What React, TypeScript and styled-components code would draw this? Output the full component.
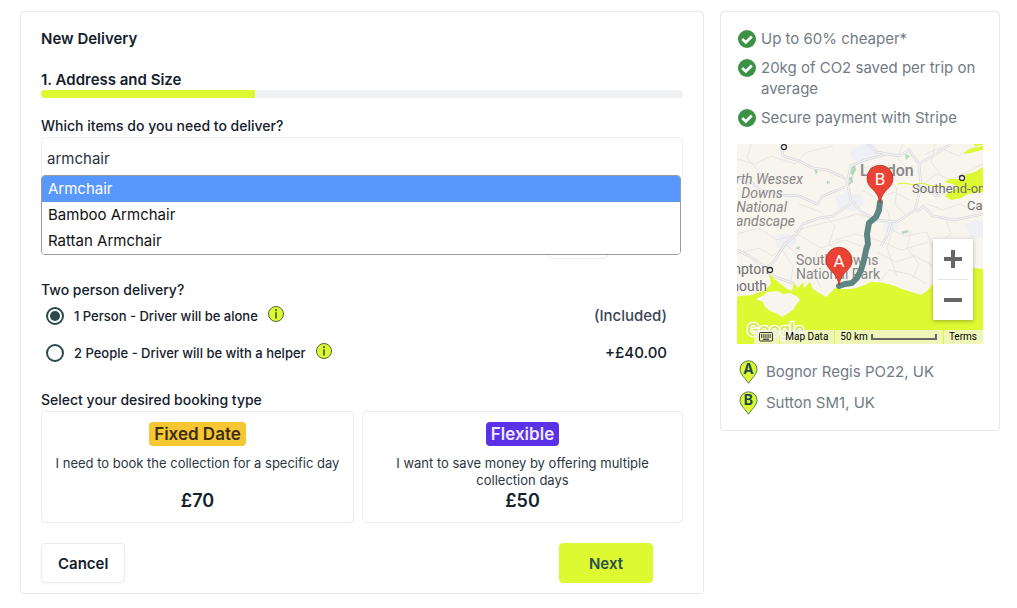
import React, { useState } from "react";
import styled, { createGlobalStyle, css } from "styled-components";

const lime = "#dcf931";
const ink = "#14202c";
const line = "#e6e8ea";

const GlobalStyle = createGlobalStyle`
  *, *::before, *::after { box-sizing: border-box; }
  body {
    margin: 0;
    background: #fff;
    color: ${ink};
    font-family: Inter, "Liberation Sans", sans-serif;
    font-size: 14px;
    line-height: 20px;
  }
  button, input { font: inherit; color: inherit; }
  h1, h2, p, ul { margin: 0; padding: 0; }
  ul { list-style: none; }
`;

const Page = styled.main`
  display: grid;
  grid-template-columns: minmax(0, 1fr) 280px;
  align-items: start;
  gap: 16px;
  padding: 11px 17px 14px 20px;
`;

const Panel = styled.section`
  border: 1px solid ${line};
  border-radius: 4px;
  background: #fff;
`;

const FormPanel = styled(Panel)`
  padding: 16px 20px 10px;
`;

const SidePanel = styled(Panel)`
  padding: 16px 16px 12px;
`;

const Title = styled.h1`
  font-size: 15px;
  font-weight: 600;
  line-height: 22px;
`;

const StepTitle = styled.h2`
  margin-top: 20px;
  font-size: 15px;
  font-weight: 600;
  line-height: 20px;
`;

const Track = styled.div`
  height: 8px;
  border-radius: 4px;
  background: #f0f1f2;
  overflow: hidden;
`;

const Fill = styled.div`
  width: 33.4%;
  height: 100%;
  background: ${lime};
`;

const labelText = css<{ $top: number }>`
  display: block;
  margin: ${(p) => p.$top}px 0 1px;
  font-weight: 500;
`;

const FieldLabel = styled.label<{ $top: number }>`
  ${labelText}
`;

const GroupLabel = styled.div<{ $top: number }>`
  ${labelText}
`;

const Combo = styled.div`
  position: relative;
`;

const SearchInput = styled.input`
  display: block;
  width: 100%;
  height: 42px;
  padding: 0 5px;
  border: 1px solid #ebecee;
  border-radius: 4px;
  background: #fff;
  color: #2b333b;
  font-size: 15px;
  outline: none;
`;

const Options = styled.ul`
  position: absolute;
  z-index: 2;
  top: 38px;
  left: 0;
  right: 2px;
  border: 1px solid #9b9b9b;
  border-radius: 4px;
  background: #fff;
  overflow: hidden;
`;

const Option = styled.li<{ $active: boolean }>`
  padding: 0 6px;
  font-size: 15px;
  line-height: 26px;
  color: ${(p) => (p.$active ? "#fff" : "#111")};
  background: ${(p) => (p.$active ? "#5897fb" : "#fff")};
`;

const AddRow = styled.div`
  display: flex;
  justify-content: flex-end;
  padding: 40px 75px 0 0;
`;

const AddButton = styled.button`
  width: 60px;
  height: 40px;
  border: 1px solid #ebecee;
  border-radius: 4px;
  background: #fff;
`;

const Choices = styled.div`
  display: grid;
  gap: 7px;
`;

const Choice = styled.div`
  display: flex;
  align-items: center;
  height: 30px;
  padding: 0 16px 0 5px;
  font-size: 13px;
  font-weight: 500;
`;

const Radio = styled.input`
  appearance: none;
  flex: none;
  display: grid;
  place-items: center;
  width: 18px;
  height: 18px;
  margin: 0 10px 0 0;
  border: 2px solid #2a4a4b;
  border-radius: 50%;
  background: #fff;
  &:checked::before {
    content: "";
    width: 10px;
    height: 10px;
    border-radius: 50%;
    background: #2a4a4b;
  }
`;

const InfoButton = styled.button`
  display: block;
  width: 16px;
  height: 20px;
  margin: 0 0 0 10px;
  padding: 0 0 4px;
  border: 0;
  background: none;
  svg { display: block; }
`;

const Extra = styled.span<{ $muted?: boolean }>`
  margin-left: auto;
  font-size: 15px;
  color: ${(p) => (p.$muted ? "#3b4556" : ink)};
`;

const Bookings = styled.div`
  display: grid;
  grid-template-columns: 313fr 321fr;
  gap: 8px;
`;

const Booking = styled.button`
  display: flex;
  flex-direction: column;
  align-items: center;
  padding: 10px 8px 9px;
  border: 1px solid #ebecee;
  border-radius: 4px;
  background: #fff;
  text-align: center;
`;

const Badge = styled.span<{ $bg: string; $fg: string }>`
  padding: 0 5px;
  border-radius: 4px;
  background: ${(p) => p.$bg};
  color: ${(p) => p.$fg};
  font-size: 17px;
  font-weight: 600;
  line-height: 24px;
`;

const Description = styled.span`
  min-height: 34px;
  max-width: 296px;
  margin-top: 9px;
  color: #2c3742;
  font-size: 13px;
  line-height: 17px;
`;

const Price = styled.strong`
  font-size: 18px;
  font-weight: 600;
  line-height: 24px;
`;

const Actions = styled.div`
  display: flex;
  justify-content: space-between;
  padding: 20px 30px 0 0;
`;

const Action = styled.button<{ $primary?: boolean }>`
  height: 40px;
  padding: 1px ${(p) => (p.$primary ? 29 : 16)}px 0;
  border: 1px solid ${(p) => (p.$primary ? lime : "#ebecee")};
  border-radius: 4px;
  background: ${(p) => (p.$primary ? lime : "#fff")};
  color: ${(p) => (p.$primary ? "#2a5048" : ink)};
  font-size: 15px;
  font-weight: 600;
  box-shadow: 0 1px 4px rgba(20, 32, 44, 0.04);
`;

const Benefits = styled.ul`
  display: grid;
  gap: 8px;
  color: #727b84;
  font-size: 15px;
  line-height: 21px;
`;

const Benefit = styled.li`
  display: flex;
  align-items: flex-start;
  gap: 5px;
  svg { flex: none; margin: 2px 0 1px 1px; }
`;

const MapBox = styled.div`
  position: relative;
  height: 200px;
  margin: 16px 0 12px;
  background: #f8f4ee;
  overflow: hidden;
  font-family: Roboto, sans-serif;
`;

const MapDrawing = styled.svg`
  display: block;
  width: 100%;
  height: 100%;
`;

const ZoomControl = styled.div`
  position: absolute;
  top: 95px;
  right: 10px;
  width: 40px;
  background: #fff;
  box-shadow: 0 1px 4px rgba(0, 0, 0, 0.3);
`;

const ZoomButton = styled.button`
  display: grid;
  place-items: center;
  width: 40px;
  height: 40px;
  padding: 0;
  border: 0;
  background: none;
`;

const ZoomRule = styled.div`
  height: 1px;
  margin: 0 5px;
  background: #e6e6e6;
`;

const MapFooter = styled.div`
  position: absolute;
  right: 0;
  bottom: 0;
  display: flex;
  height: 14px;
  color: #000;
  font-size: 10px;
  line-height: 14px;
`;

const FooterItem = styled.div`
  display: flex;
  align-items: center;
  gap: 3px;
  margin-left: 1px;
  padding: 0 6px 0 5px;
  background: rgba(245, 245, 245, 0.7);
  white-space: nowrap;
  a { color: inherit; text-decoration: none; }
`;

const PlainButton = styled.button`
  display: block;
  padding: 0;
  border: 0;
  background: none;
  svg { display: block; }
`;

const ScaleBar = styled.span`
  width: 66px;
  height: 6px;
  border: 2px solid #666;
  border-top: 0;
`;

const Stop = styled.div`
  display: flex;
  align-items: center;
  gap: 8px;
  height: 31px;
  padding-left: 2px;
  color: #727b84;
  font-size: 15px;
`;

const InfoIcon = () => (
  <svg width="16" height="16" viewBox="0 0 16 16" aria-hidden="true">
    <circle cx="8" cy="8" r="7.5" fill={lime} stroke="#4b6b3c" />
    <path d="M8 6.2V12.4" stroke="#33502f" strokeWidth="1.5" />
    <circle cx="8" cy="4" r="1" fill="#33502f" />
  </svg>
);

const CheckIcon = () => (
  <svg width="18" height="18" viewBox="0 0 18 18" aria-hidden="true">
    <circle cx="9" cy="9" r="9" fill="#3d9146" />
    <path d="M4.2 9L7.8 12.4L13.8 6.4" fill="none" stroke="#fff" strokeWidth="2.8" />
  </svg>
);

const StopPin = ({ letter }: { letter: string }) => (
  <svg width="19" height="24" viewBox="0 0 19 24" aria-hidden="true">
    <path
      d="M9.500 23.300C7 19 1 14.500 1 9.300A8.500 8.500 0 0 1 18 9.300C18 14.500 12 19 9.500 23.300Z"
      fill={lime}
      stroke="#4c7a5c"
    />
    <text x="9.500" y="14" textAnchor="middle" fontSize="14" fontWeight="700" fill="#1e4a46">
      {letter}
    </text>
  </svg>
);

const MapPin = ({ x, y, letter }: { x: number; y: number; letter: string }) => (
  <g transform={`translate(${x} ${y})`}>
    <path
      d="M0 0C-1.500 -8 -4 -10 -8 -14.500A13 13 0 1 1 8 -14.500C4 -10 1.500 -8 0 0Z"
      fill="#ea4335"
      stroke="#b93426"
      strokeWidth="0.8"
    />
    <text y="-18" textAnchor="middle" fontSize="17" fill="#fff">
      {letter}
    </text>
  </g>
);

const RouteMap = () => (
  <MapDrawing viewBox="0 0 246 200" preserveAspectRatio="xMidYMid slice">
    <rect width="246" height="200" fill="#f8f4ee" />
    <g fill="#eff0f3">
      <path d="M98 52l12 -4 14 3 4 8 -10 8 -16 -2z" />
      <path d="M112 6l14 -6h12l4 10 -12 8 -14 -2z" />
      <path d="M38 92l12 -3 10 6 -4 8 -16 1z" />
      <path d="M228 80l10 -4 8 3v14l-12 3z" />
      <path d="M146 80l10 -3 6 6 -6 6 -9 -2z" />
    </g>
    <g fill="#b3d8bd">
      <path d="M114 22l4 -3 1 7 -3 6 -3 -3z" />
      <path d="M112 34l3 -2 1 6 -4 3z" />
      <path d="M77 25l4 2 -2 4z" />
      <path d="M168 10l5 2 -4 4z" />
      <path d="M90 36l3 3 -3 1z" />
      <path d="M58 104l5 -2 -1 4z" />
      <path d="M164 88l6 -2 2 2 -6 2z" />
    </g>
    <g fill="none" stroke="#e3e0de" strokeWidth="0.8">
      <path d="M0 15L18 20L34 12L58 20L70 8L96 2" />
      <path d="M0 90L22 84L40 96L60 90L84 104L108 96L130 104" />
      <path d="M62 60L84 68L98 82L92 100L104 112" />
      <path d="M150 84L168 92L190 88L196 104" />
      <path d="M140 108L158 118L178 112L196 122" />
      <path d="M150 66L156 84L150 104L160 132" />
      <path d="M174 86L170 104L182 120L176 134" />
      <path d="M0 110L22 104L36 112L48 100L62 112" />
      <path d="M186 40L200 30L214 36L246 20" />
      <path d="M188 10L204 4L222 12L240 2" />
      <path d="M56 88L74 82L100 76L120 70L138 76" />
      <path d="M124 46L140 54L158 48L172 56" />
      <path d="M126 24L142 20L160 28L176 22" />
      <path d="M148 34L160 44L158 60L168 70" />
      <path d="M14 0L10 14L24 30L20 50" />
      <path d="M80 108L76 128L84 144" />
      <path d="M44 104L56 122L54 138" />
      <path d="M98 96L118 90L140 96L164 106L192 98" />
      <path d="M166 0L160 14L176 30" />
      <path d="M198 0L194 18L206 34" />
      <path d="M190 60L206 66L222 60L246 70" />
      <path d="M208 74L214 90L206 96" />
      <path d="M140 140L152 126L172 130L190 140" />
    </g>
    <g fill="none" stroke="#d6d7dd" strokeWidth="2.6" strokeLinejoin="round">
      <path d="M0 34L14 38L24 46L44 51L62 52L80 60L86 52L108 43" />
      <path d="M44 0L46 12L62 17L76 24L90 26L104 32L113 38" />
      <path d="M150 10L128 16L114 22L110 38L114 56L124 68L140 76L160 78L178 66L184 42L182 20L172 6L162 12L140 8L130 0" />
      <path d="M113 60L96 72L82 74L66 80L60 90L48 100L38 116L30 124L36 132L58 140" />
      <path d="M180 68L186 62L196 72L218 76L246 70" />
      <path d="M184 42L200 52L216 42" />
      <path d="M154 78L150 92L144 102" />
      <path d="M182 20L202 8L214 0" />
      <path d="M0 106L12 112L30 124" />
    </g>
    <g fill="none" stroke="#f7f5f3" strokeWidth="1.200" strokeLinejoin="round">
      <path d="M0 34L14 38L24 46L44 51L62 52L80 60L86 52L108 43" />
      <path d="M44 0L46 12L62 17L76 24L90 26L104 32L113 38" />
      <path d="M150 10L128 16L114 22L110 38L114 56L124 68L140 76L160 78L178 66L184 42L182 20L172 6L162 12L140 8L130 0" />
      <path d="M113 60L96 72L82 74L66 80L60 90L48 100L38 116L30 124L36 132L58 140" />
      <path d="M180 68L186 62L196 72L218 76L246 70" />
      <path d="M184 42L200 52L216 42" />
      <path d="M154 78L150 92L144 102" />
      <path d="M182 20L202 8L214 0" />
      <path d="M0 106L12 112L30 124" />
    </g>
    <g fill={lime}>
      <path d="M226 10L232 5L246 2V6L240 7L234 9Z" />
      <path d="M236 0H246V1L238 2Z" />
      <path d="M246 23L238 28L230 30L224 35L213 35L207 38L216 40L221 44L212 48L208 52L214 56L224 54L231 50L246 48Z" />
    </g>
    <path d="M160 40L168 39L176 41L184 39L196 42L210 42" fill="none" stroke={lime} strokeWidth="1.200" />
    <path
      d="M0 153C6 150 12 153 18 150L28 146L34 140L32 130L40 137L50 145L55 147L57 139L61 144L66 138L67 144L73 138L76 145L82 149L89 153L98 144L106 145C116 146 124 143 134 138C144 138 154 140 162 144L184 151L190 147L197 138L206 131L222 128L236 124L246 125V200H0Z"
      fill={lime}
    />
    <path d="M19 155L27 151L30 148L41 147L46 150L53 149L61 153L63 156L59 161L56 166L50 170L45 173L39 169L35 168L28 163L26 158Z" fill="#f8f4ee" />
    <g fill="#868686" fontSize="14" stroke="#f8f4ee" strokeWidth="1" paintOrder="stroke">
      <g fontStyle="italic">
        <text x="66" y="40" textAnchor="end">rth Wessex</text>
        <text x="25" y="54" textAnchor="middle">Downs</text>
        <text x="50" y="68" textAnchor="end">National</text>
        <text x="58" y="82" textAnchor="end">andscape</text>
      </g>
      <text x="59" y="121">South Downs</text>
      <text x="59" y="135">National Park</text>
      <text x="32" y="130" textAnchor="end" fill="#6f6f6f">mpton</text>
      <text x="30" y="147" textAnchor="end" fill="#6f6f6f">mouth</text>
      <text x="123" y="32" fontSize="16" fontWeight="500">London</text>
      <text x="175" y="49" fontSize="13" fill="#6f6f6f" stroke="none">Southend-on</text>
      <text x="230" y="66" fontSize="13" fill="#6f6f6f">Can</text>
    </g>
    <g fill="#fff" stroke="#333" strokeWidth="1.300">
      <circle cx="47" cy="3" r="2.500" />
      <circle cx="225" cy="34" r="2.500" />
      <circle cx="33" cy="126" r="2.500" />
    </g>
    <path
      d="M143 58L142 66L139 73L132 79L130 90L131 100L129 106L127 116L124 126L120 134L115 139L108 140L102 142"
      fill="none"
      stroke="#5d8582"
      strokeWidth="6"
      strokeLinejoin="round"
      strokeLinecap="round"
    />
    <MapPin x={143} y={59} letter="B" />
    <MapPin x={102} y={141} letter="A" />
    <text x="10" y="192" fontSize="18" fontWeight="500" fill="#d3e65a" stroke="#fff" strokeWidth="2.500" paintOrder="stroke">
      Google
    </text>
  </MapDrawing>
);

const items = ["Armchair", "Bamboo Armchair", "Rattan Armchair"];

const people = [
  { id: "one", text: "1 Person - Driver will be alone", extra: "(Included)", muted: true },
  { id: "two", text: "2 People - Driver will be with a helper", extra: "+£40.00", muted: false },
];

const benefits = [
  "Up to 60% cheaper*",
  "20kg of CO2 saved per trip on average",
  "Secure payment with Stripe",
];

export default function App() {
  const [query, setQuery] = useState("armchair");
  const [crew, setCrew] = useState("one");

  return (
    <>
      <GlobalStyle />
      <Page>
        <FormPanel>
          <Title>New Delivery</Title>
          <StepTitle>1. Address and Size</StepTitle>
          <Track>
            <Fill />
          </Track>

          <FieldLabel $top={18} htmlFor="item">
            Which items do you need to deliver?
          </FieldLabel>
          <Combo>
            <SearchInput id="item" value={query} onChange={(e) => setQuery(e.target.value)} />
            <Options role="listbox">
              {items.map((item, i) => (
                <Option key={item} role="option" aria-selected={i === 0} $active={i === 0}>
                  {item}
                </Option>
              ))}
            </Options>
            <AddRow>
              <AddButton type="button" aria-label="Add item" />
            </AddRow>
          </Combo>

          <GroupLabel $top={21} id="crew-label">
            Two person delivery?
          </GroupLabel>
          <Choices role="radiogroup" aria-labelledby="crew-label">
            {people.map((p) => (
              <Choice key={p.id}>
                <Radio
                  type="radio"
                  name="crew"
                  id={p.id}
                  checked={crew === p.id}
                  onChange={() => setCrew(p.id)}
                />
                <label htmlFor={p.id}>{p.text}</label>
                <InfoButton type="button" aria-label="More information">
                  <InfoIcon />
                </InfoButton>
                <Extra $muted={p.muted}>{p.extra}</Extra>
              </Choice>
            ))}
          </Choices>

          <GroupLabel $top={22}>Select your desired booking type</GroupLabel>
          <Bookings>
            <Booking type="button">
              <Badge $bg="#f6c733" $fg="#3d2f0c">Fixed Date</Badge>
              <Description>I need to book the collection for a specific day</Description>
              <Price>£70</Price>
            </Booking>
            <Booking type="button">
              <Badge $bg="#5a31e6" $fg="#efe9ff">Flexible</Badge>
              <Description>I want to save money by offering multiple collection days</Description>
              <Price>£50</Price>
            </Booking>
          </Bookings>

          <Actions>
            <Action type="button">Cancel</Action>
            <Action type="button" $primary>Next</Action>
          </Actions>
        </FormPanel>

        <SidePanel>
          <Benefits>
            {benefits.map((b) => (
              <Benefit key={b}>
                <CheckIcon />
                <span>{b}</span>
              </Benefit>
            ))}
          </Benefits>
          <MapBox>
            <RouteMap />
            <ZoomControl>
              <ZoomButton type="button" aria-label="Zoom in">
                <svg width="18" height="18" viewBox="0 0 18 18">
                  <path d="M0 9H18M9 0V18" stroke="#666" strokeWidth="4" />
                </svg>
              </ZoomButton>
              <ZoomRule />
              <ZoomButton type="button" aria-label="Zoom out">
                <svg width="18" height="18" viewBox="0 0 18 18">
                  <path d="M0 9H18" stroke="#666" strokeWidth="4" />
                </svg>
              </ZoomButton>
            </ZoomControl>
            <MapFooter>
              <FooterItem>
                <PlainButton type="button" aria-label="Keyboard shortcuts">
                  <svg width="14" height="10" viewBox="0 0 14 10">
                    <rect x="0.500" y="0.500" width="13" height="8.500" rx="1" fill="#e9eeb4" stroke="#333" />
                    <path d="M2 3H12M2 5H12" stroke="#333" strokeWidth="1.300" strokeDasharray="1.300 0.850" />
                    <path d="M4 7.200H10" stroke="#333" strokeWidth="1.200" />
                  </svg>
                </PlainButton>
              </FooterItem>
              <FooterItem>
                <PlainButton type="button">Map Data</PlainButton>
              </FooterItem>
              <FooterItem>
                50 km
                <ScaleBar />
              </FooterItem>
              <FooterItem>
                <a href="#terms">Terms</a>
              </FooterItem>
            </MapFooter>
          </MapBox>
          <Stop>
            <StopPin letter="A" />
            Bognor Regis PO22, UK
          </Stop>
          <Stop>
            <StopPin letter="B" />
            Sutton SM1, UK
          </Stop>
        </SidePanel>
      </Page>
    </>
  );
}
